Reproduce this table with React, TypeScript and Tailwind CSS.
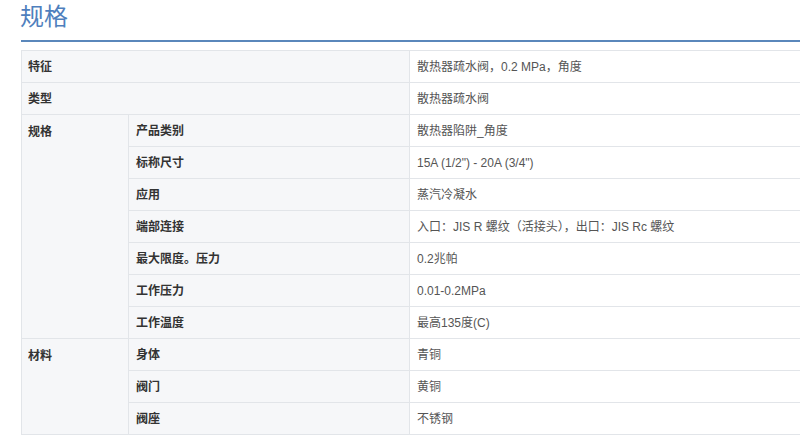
const rows: { group?: string; span?: number; label: string; value: string; full?: boolean }[] = [
  { label: "特征", value: "散热器疏水阀，0.2 MPa，角度", full: true },
  { label: "类型", value: "散热器疏水阀", full: true },
  { group: "规格", span: 7, label: "产品类别", value: "散热器陷阱_角度" },
  { label: "标称尺寸", value: "15A (1/2\") - 20A (3/4\")" },
  { label: "应用", value: "蒸汽冷凝水" },
  { label: "端部连接", value: "入口：JIS R 螺纹（活接头），出口：JIS Rc 螺纹" },
  { label: "最大限度。压力", value: "0.2兆帕" },
  { label: "工作压力", value: "0.01-0.2MPa" },
  { label: "工作温度", value: "最高135度(C)" },
  { group: "材料", span: 3, label: "身体", value: "青铜" },
  { label: "阀门", value: "黄铜" },
  { label: "阀座", value: "不锈钢" },
];

export default function App() {
  return (
    <div
      className="w-[800px] h-[441px] overflow-hidden bg-white"
      style={{ fontFamily: '"Liberation Sans", "Noto Sans CJK SC", sans-serif' }}
    >
      <div className="pl-[21px]">
        <h1 className="h-[40px] pt-[2px] text-[24px] leading-[30px] text-[#4f7fbd] -ml-[1px] font-normal">规格</h1>
        <div className="h-[2px] bg-[#5a87bb]" />
        <table className="mt-[8px] w-[800px] border-collapse text-[12px]">
          <colgroup>
            <col className="w-[107px]" />
            <col className="w-[281px]" />
            <col />
          </colgroup>
          <tbody>
            {rows.map((r, i) => (
              <tr key={i} className="h-[32px]">
                {r.full ? (
                  <th
                    colSpan={2}
                    className="border border-[#e2e5e9] bg-[#f6f7f9] px-[6px] text-left align-middle font-bold text-[#333]"
                  >
                    {r.label}
                  </th>
                ) : (
                  <>
                    {r.group && (
                      <th
                        rowSpan={r.span}
                        className="border border-[#e2e5e9] bg-[#f6f7f9] px-[6px] pt-[8px] text-left align-top font-bold text-[#333]"
                      >
                        {r.group}
                      </th>
                    )}
                    <th className="border border-[#e2e5e9] bg-[#f6f7f9] px-[7px] text-left align-middle font-bold text-[#333]">
                      {r.label}
                    </th>
                  </>
                )}
                <td className="border border-[#e2e5e9] bg-white px-[7px] align-middle text-[#555]">{r.value}</td>
              </tr>
            ))}
          </tbody>
        </table>
      </div>
    </div>
  );
}
